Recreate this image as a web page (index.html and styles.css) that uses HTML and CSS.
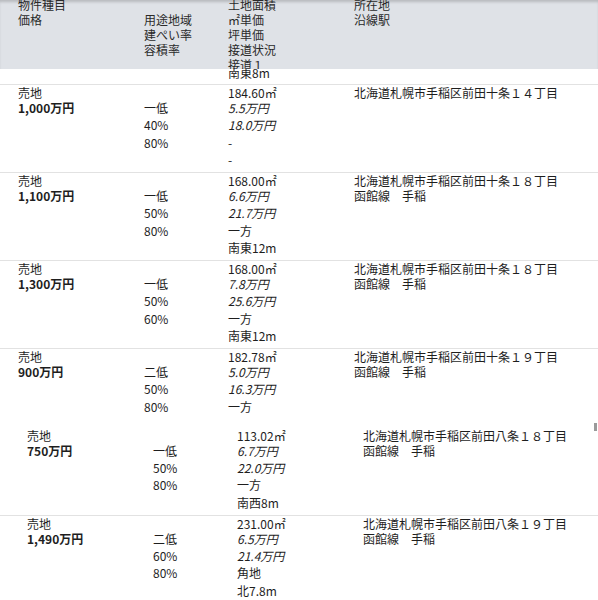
FILE: index.html
```html
<!DOCTYPE html>
<html lang="ja">
<head>
<meta charset="utf-8">
<title>物件一覧</title>
<link rel="stylesheet" href="styles.css">
</head>
<body>
<div class="page">
  <div class="head">
    <div class="head-grid">
      <div class="hc"><div>物件種目</div><div>価格</div></div>
      <div class="hc hc2"><div>用途地域</div><div>建ぺい率</div><div>容積率</div></div>
      <div class="hc"><div>土地面積</div><div>㎡単価</div><div>坪単価</div><div>接道状況</div><div>接道１</div></div>
      <div class="hc"><div>所在地</div><div>沿線駅</div></div>
    </div>
  </div>

  <div class="list">
    <div class="row partial">
      <div class="c"></div>
      <div class="c"></div>
      <div class="c"><div class="ln">南東8m</div></div>
      <div class="c"></div>
    </div>

    <div class="row">
      <div class="c"><div class="l1">売地</div><div class="l2 price">1,000万円</div></div>
      <div class="c c2"><div class="l2">一低</div><div class="ln">40%</div><div class="ln">80%</div></div>
      <div class="c"><div class="l1">184.60㎡</div><div class="l2 it">5.5万円</div><div class="ln it">18.0万円</div><div class="ln">-</div><div class="ln">-</div></div>
      <div class="c"><div class="l1">北海道札幌市手稲区前田十条１４丁目</div></div>
    </div>

    <div class="row">
      <div class="c"><div class="l1">売地</div><div class="l2 price">1,100万円</div></div>
      <div class="c c2"><div class="l2">一低</div><div class="ln">50%</div><div class="ln">80%</div></div>
      <div class="c"><div class="l1">168.00㎡</div><div class="l2 it">6.6万円</div><div class="ln it">21.7万円</div><div class="ln">一方</div><div class="ln">南東12m</div></div>
      <div class="c"><div class="l1">北海道札幌市手稲区前田十条１８丁目</div><div class="l2">函館線　手稲</div></div>
    </div>

    <div class="row">
      <div class="c"><div class="l1">売地</div><div class="l2 price">1,300万円</div></div>
      <div class="c c2"><div class="l2">一低</div><div class="ln">50%</div><div class="ln">60%</div></div>
      <div class="c"><div class="l1">168.00㎡</div><div class="l2 it">7.8万円</div><div class="ln it">25.6万円</div><div class="ln">一方</div><div class="ln">南東12m</div></div>
      <div class="c"><div class="l1">北海道札幌市手稲区前田十条１８丁目</div><div class="l2">函館線　手稲</div></div>
    </div>

    <div class="row">
      <div class="c"><div class="l1">売地</div><div class="l2 price">900万円</div></div>
      <div class="c c2"><div class="l2">二低</div><div class="ln">50%</div><div class="ln">80%</div></div>
      <div class="c"><div class="l1">182.78㎡</div><div class="l2 it">5.0万円</div><div class="ln it">16.3万円</div><div class="ln">一方</div></div>
      <div class="c"><div class="l1">北海道札幌市手稲区前田十条１９丁目</div><div class="l2">函館線　手稲</div></div>
    </div>
  </div>

  <div class="list shifted">
    <div class="row first">
      <div class="c"><div class="l1">売地</div><div class="l2 price">750万円</div></div>
      <div class="c c2"><div class="l2">一低</div><div class="ln">50%</div><div class="ln">80%</div></div>
      <div class="c"><div class="l1">113.02㎡</div><div class="l2 it">6.7万円</div><div class="ln it">22.0万円</div><div class="ln">一方</div><div class="ln">南西8m</div></div>
      <div class="c"><div class="l1">北海道札幌市手稲区前田八条１８丁目</div><div class="l2">函館線　手稲</div></div>
    </div>

    <div class="row">
      <div class="c"><div class="l1">売地</div><div class="l2 price">1,490万円</div></div>
      <div class="c c2"><div class="l2">二低</div><div class="ln">60%</div><div class="ln">80%</div></div>
      <div class="c"><div class="l1">231.00㎡</div><div class="l2 it">6.5万円</div><div class="ln it">21.4万円</div><div class="ln">角地</div><div class="ln">北7.8m</div></div>
      <div class="c"><div class="l1">北海道札幌市手稲区前田八条１９丁目</div><div class="l2">函館線　手稲</div></div>
    </div>
  </div>

  <div class="thumb"></div>
</div>
</body>
</html>
```

FILE: styles.css
```css
html, body {
  margin: 0;
  padding: 0;
  background: #ffffff;
}

body {
  font-family: "Noto Sans CJK JP", "Noto Sans", sans-serif;
  font-size: 12px;
  color: #1e1e1e;
  width: 598px;
  height: 600px;
  overflow: hidden;
}

.page {
  position: relative;
  width: 598px;
  height: 600px;
  overflow: hidden;
}

.head {
  position: absolute;
  top: 0;
  left: 0;
  right: 0;
  height: 69px;
  background: #dfe2e7;
  box-shadow: inset 0 3px 3px -1px rgba(0, 0, 0, 0.18);
  z-index: 2;
  overflow: hidden;
}

.head-grid {
  display: grid;
  grid-template-columns: 126px 84px 126px 1fr;
  padding-left: 18px;
  margin-top: -3px;
  line-height: 15px;
  color: #2a2a2a;
}

.hc2 {
  padding-top: 15px;
}

.list {
  display: flex;
  flex-direction: column;
}

.row {
  display: grid;
  grid-template-columns: 126px 84px 126px 1fr;
  padding-left: 18px;
  padding-bottom: 3.5px;
  border-top: 1px solid #e2e2e2;
}

.row.partial {
  border-top: none;
  padding-top: 64px;
  padding-bottom: 2.5px;
}

.shifted {
  margin-top: 8px;
}

.shifted .row {
  padding-left: 27px;
}

.shifted .row.first {
  border-top: 1px solid transparent;
}

.c2 {
  padding-top: 15px;
}

.l1 {
  line-height: 15px;
  white-space: nowrap;
}

.l2 {
  line-height: 16px;
  white-space: nowrap;
}

.ln {
  line-height: 17.5px;
  white-space: nowrap;
}

.price {
  font-weight: 700;
}

.it {
  font-style: italic;
}

.thumb {
  position: absolute;
  right: 1px;
  top: 423px;
  width: 3px;
  height: 8px;
  background: #9a9a9a;
}
```
